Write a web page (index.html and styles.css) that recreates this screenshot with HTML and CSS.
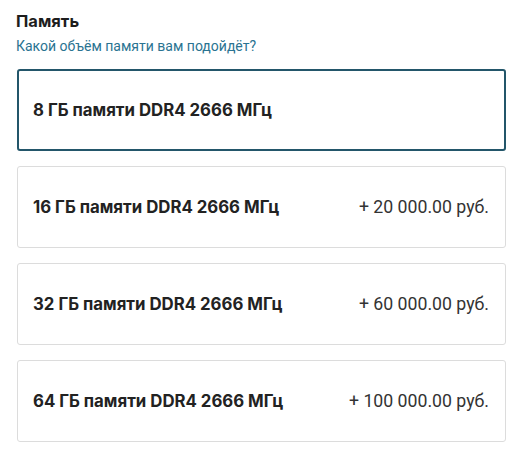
FILE: index.html
```html
<!DOCTYPE html>
<html lang="ru">
<head>
<meta charset="utf-8">
<link rel="stylesheet" href="styles.css">
</head>
<body>
<section class="memory">
  <h2 class="title">Память</h2>
  <p class="hint">Какой объём памяти вам подойдёт?</p>
  <div class="options">
    <div class="option selected"><span class="name">8 ГБ памяти DDR4 2666 МГц</span></div>
    <div class="option"><span class="name">16 ГБ памяти DDR4 2666 МГц</span><span class="price">+ 20 000.00 руб.</span></div>
    <div class="option"><span class="name">32 ГБ памяти DDR4 2666 МГц</span><span class="price">+ 60 000.00 руб.</span></div>
    <div class="option"><span class="name">64 ГБ памяти DDR4 2666 МГц</span><span class="price">+ 100 000.00 руб.</span></div>
  </div>
</section>
</body>
</html>
```
FILE: styles.css
```css
html, body {
  margin: 0;
  padding: 0;
  background: #ffffff;
}
body {
  font-family: "Inter", sans-serif;
  color: #222222;
}
.memory {
  padding: 11px 11px 0 17px;
}
.title {
  margin: 0 0 0 -1px;
  font-size: 16.5px;
  font-weight: 700;
  line-height: 20px;
  color: #1d1d1d;
}
.hint {
  margin: 7px 0 0 -1px;
  font-family: "Roboto", sans-serif;
  font-size: 14px;
  line-height: 16px;
  color: #2a7391;
}
.options {
  display: flex;
  flex-direction: column;
  gap: 15px;
  margin-top: 15px;
}
.option {
  box-sizing: border-box;
  height: 82px;
  display: flex;
  align-items: center;
  justify-content: space-between;
  padding: 0 16px 0 15px;
  border: 1px solid #dcdcdc;
  border-radius: 3px;
}
.option.selected {
  border: 2px solid #23566a;
  padding-left: 14px;
}
.name {
  font-family: "Inter", sans-serif;
  font-size: 16.8px;
  font-weight: 700;
  color: #222222;
}
.price {
  font-family: "Roboto", sans-serif;
  font-size: 17.7px;
  color: #333333;
}
```
